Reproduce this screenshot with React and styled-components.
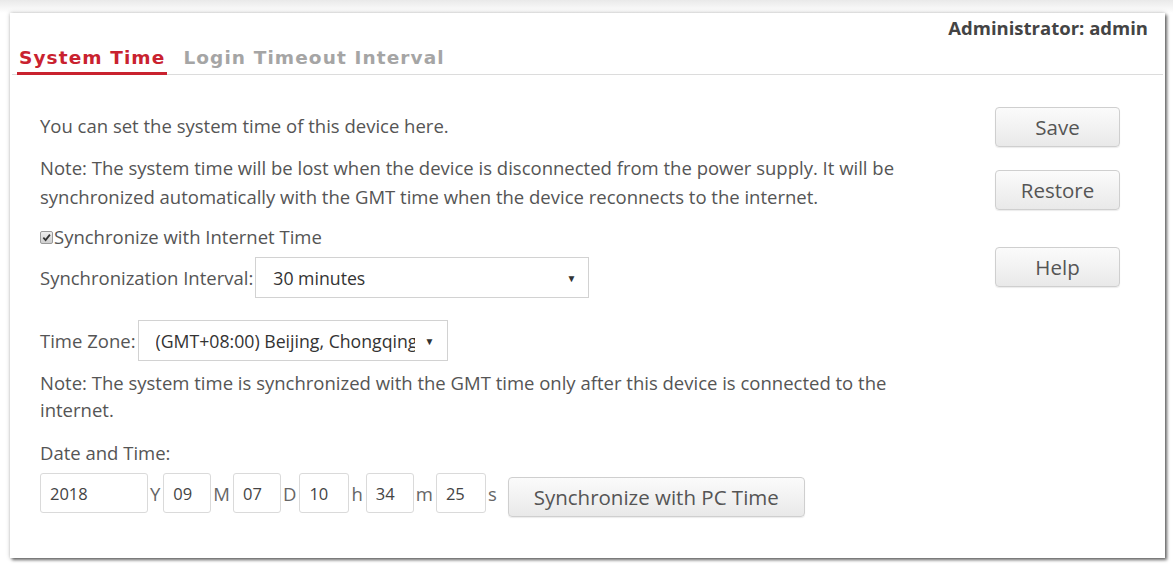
import React from "react";
import styled, { createGlobalStyle } from "styled-components";

const Global = createGlobalStyle`
  html, body {
    margin: 0;
    padding: 0;
    background: #fff;
  }
  body {
    font-family: "Open Sans", "Noto Sans", sans-serif;
    color: #555;
  }
`;

const Page = styled.div`
  padding: 13px 8px 7px 10px;
  background: linear-gradient(#e9e9e9, #fff 13px);
`;

const Panel = styled.section`
  height: 545px;
  box-sizing: border-box;
  background: #fff;
  box-shadow: 0 0 4px rgba(0, 0, 0, 0.25), 2px 2px 3px rgba(0, 0, 0, 0.55);
  display: flex;
  flex-direction: column;
`;

const AdminBar = styled.div`
  height: 29px;
  padding: 4px 17px 0 0;
  box-sizing: border-box;
  text-align: right;
  font-size: 18.5px;
  font-weight: 700;
  color: #444;
  line-height: 22px;
`;

const TabRow = styled.nav`
  display: flex;
  gap: 14px;
  padding: 0 0 0 5px;
  margin: 0 2px;
  border-bottom: 1px solid #dcdcdc;
`;

const Tab = styled.span`
  font-family: "DejaVu Sans", "Open Sans", sans-serif;
  font-weight: 700;
  font-size: 18.5px;
  letter-spacing: 1.1px;
  line-height: 22px;
  padding: 5px 2px 3px;
  margin-bottom: -1px;
  color: ${(p) => (p.$active ? "#c9222f" : "#a5a5a5")};
  border-bottom: 3px solid ${(p) => (p.$active ? "#c9222f" : "transparent")};
`;

const Content = styled.div`
  display: flex;
  padding: 32px 45px 0 30px;
`;

const Main = styled.div`
  flex: 1;
  padding-top: 5px;
  font-size: 18.5px;
`;

const Side = styled.div`
  width: 125px;
  display: flex;
  flex-direction: column;
`;

const Text = styled.p`
  margin: ${(p) => p.$mt || 0}px 0 0;
  line-height: ${(p) => p.$lh || 28}px;
  max-width: ${(p) => p.$w || 940}px;
`;

const CheckRow = styled.label`
  display: flex;
  align-items: center;
  margin-top: 12px;
  line-height: 28px;
`;

const Check = styled.span`
  width: 11px;
  height: 11px;
  border: 1px solid #9a9a9a;
  border-radius: 2px;
  background: linear-gradient(#eee, #cfcfcf);
  display: inline-flex;
  align-items: center;
  justify-content: center;
  margin-right: 1px;
  svg {
    display: block;
  }
`;

const Field = styled.div`
  display: flex;
  align-items: center;
  margin-top: ${(p) => p.$mt || 0}px;
`;

const SelectWrap = styled.div`
  position: relative;
  width: ${(p) => p.$w}px;
  margin-left: 2px;
  &::after {
    content: "▼";
    position: absolute;
    right: 13px;
    top: 50%;
    transform: translateY(-50%);
    font-size: 10px;
    color: #333;
    pointer-events: none;
  }
`;

const Select = styled.select`
  appearance: none;
  width: 100%;
  height: 41px;
  border: 1px solid #d2d2d2;
  background: #fff;
  padding: 0 32px 0 17px;
  font-family: "Open Sans", sans-serif;
  font-size: 17.7px;
  color: #333;
  outline: none;
`;

const DateRow = styled.div`
  display: flex;
  align-items: center;
  margin-top: 2px;
`;

const NumInput = styled.input`
  width: ${(p) => p.$w}px;
  height: 40px;
  box-sizing: border-box;
  border: 1px solid #dadada;
  border-radius: 3px;
  padding: 0 0 0 9px;
  font-family: "Open Sans", sans-serif;
  font-size: 16.5px;
  color: #444;
  outline: none;
`;

const Unit = styled.span`
  font-size: 18.5px;
  color: #666;
  margin: 0 3px 0 2px;
`;

const Button = styled.button`
  height: 40px;
  width: ${(p) => (p.$w ? `${p.$w}px` : "100%")};
  margin-top: ${(p) => p.$mt || 0}px;
  margin-left: ${(p) => p.$ml || 0}px;
  border: 1px solid #cfcfcf;
  border-radius: 4px;
  background: linear-gradient(#fbfbfb, #e9e9e9);
  box-shadow: 0 1px 1px rgba(0, 0, 0, 0.08);
  font-family: "Open Sans", sans-serif;
  font-size: 20.5px;
  color: #555;
  padding: 0;
`;

export default function App() {
  return (
    <>
      <Global />
      <Page>
        <Panel>
          <AdminBar>Administrator: admin</AdminBar>
          <TabRow>
            <Tab $active>System Time</Tab>
            <Tab>Login Timeout Interval</Tab>
          </TabRow>
          <Content>
            <Main>
              <Text>You can set the system time of this device here.</Text>
              <Text $mt={13} $lh={29} $w={900}>
                Note: The system time will be lost when the device is
                disconnected from the power supply. It will be synchronized
                automatically with the GMT time when the device reconnects to
                the internet.
              </Text>
              <CheckRow>
                <Check>
                  <svg width="9" height="9" viewBox="0 0 10 10">
                    <path
                      d="M1.5 5.2 L4 7.8 L8.8 1.8"
                      fill="none"
                      stroke="#333"
                      strokeWidth="2"
                    />
                  </svg>
                </Check>
                Synchronize with Internet Time
              </CheckRow>
              <Field $mt={6}>
                Synchronization Interval:
                <SelectWrap $w={334}>
                  <Select defaultValue="30">
                    <option value="30">30 minutes</option>
                  </Select>
                </SelectWrap>
              </Field>
              <Field $mt={22}>
                Time Zone:
                <SelectWrap $w={310}>
                  <Select defaultValue="bj">
                    <option value="bj">
                      (GMT+08:00) Beijing, Chongqing, Hong Kong, Urumqi
                    </option>
                  </Select>
                </SelectWrap>
              </Field>
              <Text $mt={8} $lh={27} $w={880}>
                Note: The system time is synchronized with the GMT time only
                after this device is connected to the internet.
              </Text>
              <Text $mt={16}>Date and Time:</Text>
              <DateRow>
                <NumInput $w={108} defaultValue="2018" />
                <Unit>Y</Unit>
                <NumInput $w={48} defaultValue="09" />
                <Unit>M</Unit>
                <NumInput $w={48} defaultValue="07" />
                <Unit>D</Unit>
                <NumInput $w={50} defaultValue="10" />
                <Unit>h</Unit>
                <NumInput $w={48} defaultValue="34" />
                <Unit>m</Unit>
                <NumInput $w={50} defaultValue="25" />
                <Unit>s</Unit>
                <Button $w={297} $mt={8} $ml={8}>
                  Synchronize with PC Time
                </Button>
              </DateRow>
            </Main>
            <Side>
              <Button>Save</Button>
              <Button $mt={23}>Restore</Button>
              <Button $mt={37}>Help</Button>
            </Side>
          </Content>
        </Panel>
      </Page>
    </>
  );
}
